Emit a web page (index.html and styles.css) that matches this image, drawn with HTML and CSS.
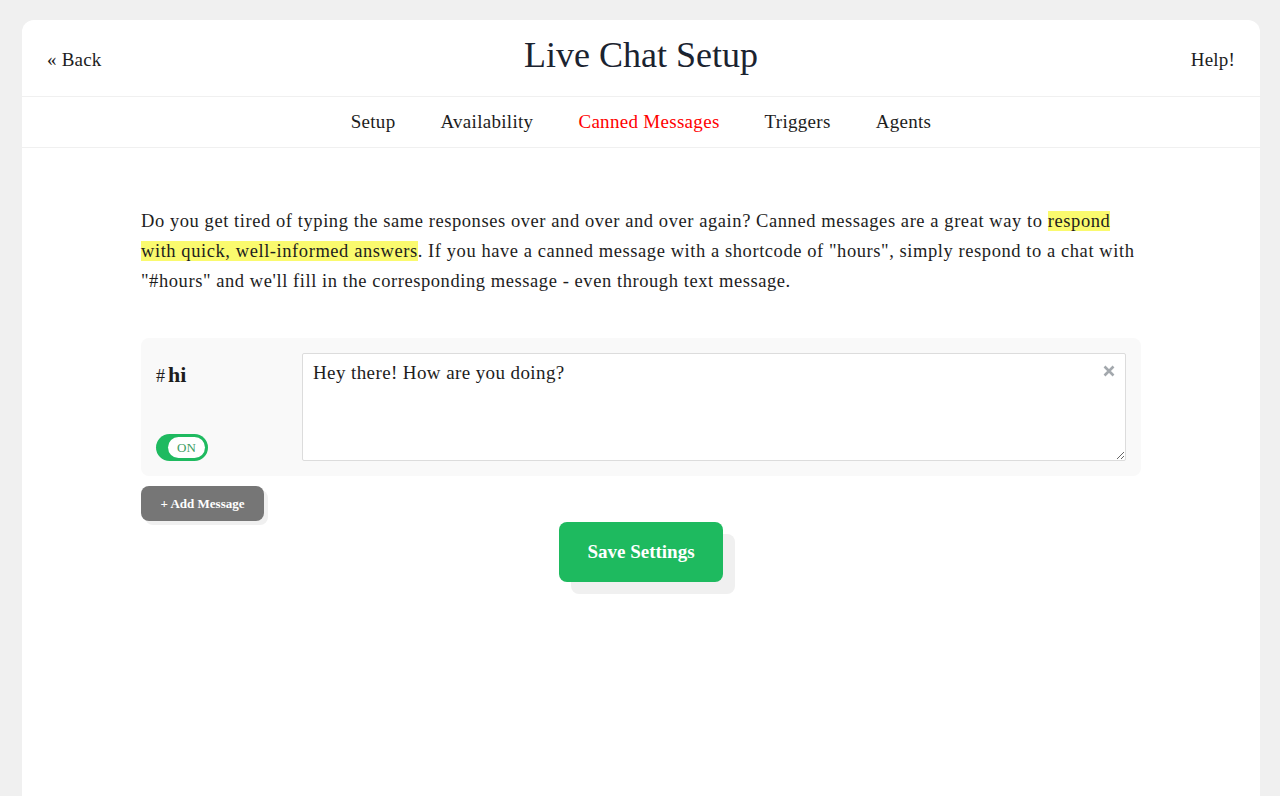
FILE: index.html
```html
<!DOCTYPE html>
<html>
<head>
<meta charset="utf-8">
<link rel="stylesheet" href="styles.css">
</head>
<body>
<div class="card">
  <header class="top">
    <a class="back">« Back</a>
    <h1 class="title">Live Chat Setup</h1>
    <a class="help">Help!</a>
  </header>
  <nav class="tabs">
    <a>Setup</a>
    <a>Availability</a>
    <a class="active">Canned Messages</a>
    <a>Triggers</a>
    <a>Agents</a>
  </nav>
  <main class="content">
    <p class="intro">Do you get tired of typing the same responses over and over and over again? Canned messages are a great way to <mark>respond</mark> <mark>with quick, well-informed answers</mark>. If you have a canned message with a shortcode of "hours", simply respond to a chat with "#hours" and we'll fill in the corresponding message - even through text message.</p>
    <div class="msg">
      <div class="msg-side">
        <div class="code"><span class="hash">#</span><b>hi</b></div>
        <div class="toggle"><span class="toggle-knob">ON</span></div>
      </div>
      <div class="msg-body">
        <textarea class="msg-text">Hey there! How are you doing?</textarea>
        <svg class="close" width="12" height="12" viewBox="0 0 12 12"><path d="M1.5 1.5L10.5 10.5M10.5 1.5L1.5 10.5" stroke="#a3a8ad" stroke-width="2.6" stroke-linecap="butt" fill="none"/></svg>
      </div>
    </div>
    <div class="add-row"><button class="add">+ Add Message</button></div>
    <div class="save-row"><button class="save">Save Settings</button></div>
  </main>
</div>
</body>
</html>
```

FILE: styles.css
```css
html, body { margin: 0; padding: 0; }
body {
  background: #f0f0f0;
  font-family: "Liberation Serif", "DejaVu Serif", serif;
  color: #1d1d1d;
  padding: 20px 20px 0 22px;
  height: 796px;
  box-sizing: border-box;
  overflow: hidden;
}
.card {
  background: #fff;
  border-radius: 12px;
  height: 800px;
}
.top {
  display: flex;
  align-items: center;
  justify-content: space-between;
  height: 76px;
  padding: 0 25px;
  border-bottom: 1px solid #f0f0f0;
  position: relative;
}
.back, .help { font-size: 19px; color: #1d1d1d; padding-top: 4px; letter-spacing: 0.2px; }
.title {
  margin: 0;
  font-weight: normal;
  font-size: 36px;
  color: #1b2330;
  position: absolute;
  left: 0; right: 0;
  text-align: center;
  top: 14px;
}
.tabs {
  display: flex;
  justify-content: center;
  gap: 45px;
  height: 50px;
  align-items: center;
  border-bottom: 1px solid #f0f0f0;
  font-size: 19px;
  letter-spacing: 0.3px;
}
.tabs a { color: #1d1d1d; }
.tabs a.active { color: #ff0000; }
.content {
  width: 1000px;
  margin: 0 auto;
  padding-top: 58px;
}
.intro {
  margin: 0 0 42px;
  font-size: 18.5px;
  letter-spacing: 0.57px;
  line-height: 30px;
  color: #1d1d1d;
}
.intro mark { background: #fafa6e; color: inherit; }
.msg {
  background: #f9f9f9;
  border-radius: 8px;
  display: flex;
  padding: 15px;
}
.msg-side {
  width: 146px;
  display: flex;
  flex-direction: column;
  justify-content: space-between;
}
.code { font-size: 22px; padding-top: 9px; }
.hash { font-size: 18px; margin-right: 3px; }
.code b { font-weight: bold; }
.toggle {
  width: 52px;
  height: 27px;
  box-sizing: border-box;
  background: #1fba60;
  border-radius: 14px;
  padding: 3px 3px 3px 12px;
}
.toggle-knob {
  display: block;
  height: 21px;
  background: #fff;
  border-radius: 11px;
  font-size: 13px;
  color: #3d9d63;
  text-align: center;
  line-height: 22px;
}
.msg-body { flex: 1; position: relative; display: flex; }
.msg-text {
  flex: 1;
  height: 108px;
  box-sizing: border-box;
  border: 1px solid #dcdcdc;
  border-radius: 2px;
  font-family: inherit;
  font-size: 19px;
  letter-spacing: 0.4px;
  color: #1d1d1d;
  padding: 8px 10px;
  resize: vertical;
  background: #fff;
}
.close {
  position: absolute;
  right: 11px;
  top: 12px;
}
.add-row { padding-top: 10px; }
.add {
  font-family: inherit;
  background: #767676;
  color: #fff;
  border: none;
  border-radius: 8px;
  width: 123px;
  height: 35px;
  font-size: 13px;
  font-weight: bold;
  box-shadow: 4px 4px 0 #f0f0f0;
  padding: 0;
}
.save-row { display: flex; justify-content: center; margin-top: 1px; }
.save {
  font-family: inherit;
  background: #1eba5f;
  color: #fff;
  border: none;
  border-radius: 8px;
  width: 164px;
  height: 60px;
  font-size: 19px;
  font-weight: bold;
  box-shadow: 12px 12px 0 #f0f0f0;
  padding: 0;
}
```
